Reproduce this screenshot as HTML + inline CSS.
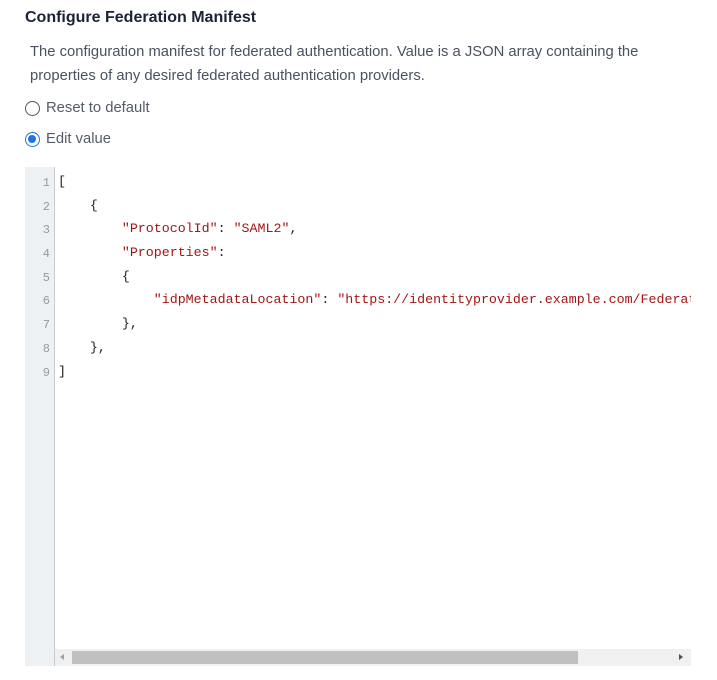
<!DOCTYPE html>
<html><head><meta charset="utf-8"><style>
body{margin:0;background:#fff;width:717px;height:680px;overflow:hidden;font-family:"Liberation Sans",sans-serif;}
h1{position:absolute;left:25px;top:9px;margin:0;font-size:16px;font-weight:bold;color:#1b2437;}
.desc{position:absolute;left:30px;top:40px;font-size:14.8px;line-height:24px;color:#4a5160;width:640px;}
.r{position:absolute;left:25px;font-size:14.8px;color:#555b66;display:flex;align-items:center;}
.c{width:15px;height:15px;border:1.5px solid #555;border-radius:50%;margin-right:6px;box-sizing:border-box;}
.c.on{border:1.5px solid #1a73e8;position:relative}
.c.on:after{content:"";position:absolute;left:2px;top:2px;width:8px;height:8px;border-radius:50%;background:#1a73e8}
.ed{position:absolute;left:25px;top:167px;width:666px;height:499px;overflow:hidden;}
.gut{position:absolute;left:0;top:0;width:29px;height:499px;background:#eef1f4;border-right:1px solid #c8ccd0;}
.ln{position:absolute;left:0;width:25px;text-align:right;font-family:"Liberation Mono",monospace;font-size:12px;color:#999;}
.code{position:absolute;left:33px;font-family:"Liberation Mono",monospace;font-size:13.3px;white-space:pre;color:#222;}
.s{color:#a31515}
.sb{position:absolute;left:30px;top:482px;width:636px;height:17px;background:#f0f0f0;}
.th{position:absolute;left:17px;top:2px;width:506px;height:13px;background:#c0c0c0;}
</style></head><body>
<h1>Configure Federation Manifest</h1>
<div class="desc">The configuration manifest for federated authentication. Value is a JSON array containing the properties of any desired federated authentication providers.</div>
<div class="r" style="top:100px"><div class="c"></div>Reset to default</div>
<div class="r" style="top:131px"><div class="c on"></div>Edit value</div>
<div class="ed">
<div class="gut"></div>
<div class="ln" style="top:9px">1</div><div class="code" style="top:7px">[</div>
<div class="ln" style="top:33px">2</div><div class="code" style="top:31px">    {</div>
<div class="ln" style="top:56px">3</div><div class="code" style="top:54px">        <span class="s">"ProtocolId"</span>: <span class="s">"SAML2"</span>,</div>
<div class="ln" style="top:80px">4</div><div class="code" style="top:78px">        <span class="s">"Properties"</span>:</div>
<div class="ln" style="top:104px">5</div><div class="code" style="top:102px">        {</div>
<div class="ln" style="top:127px">6</div><div class="code" style="top:125px">            <span class="s">"idpMetadataLocation"</span>: <span class="s">"https://identityprovider.example.com/Federatio</span></div>
<div class="ln" style="top:151px">7</div><div class="code" style="top:149px">        },</div>
<div class="ln" style="top:175px">8</div><div class="code" style="top:173px">    },</div>
<div class="ln" style="top:199px">9</div><div class="code" style="top:197px">]</div>
<div class="sb"><div class="th"></div>
<div style="position:absolute;left:5px;top:5px;width:0;height:0;border-top:3.5px solid transparent;border-bottom:3.5px solid transparent;border-right:4px solid #a0a0a0"></div>
<div style="position:absolute;right:8px;top:5px;width:0;height:0;border-top:3.5px solid transparent;border-bottom:3.5px solid transparent;border-left:4px solid #505050"></div>
</div>
</div>
</body></html>
